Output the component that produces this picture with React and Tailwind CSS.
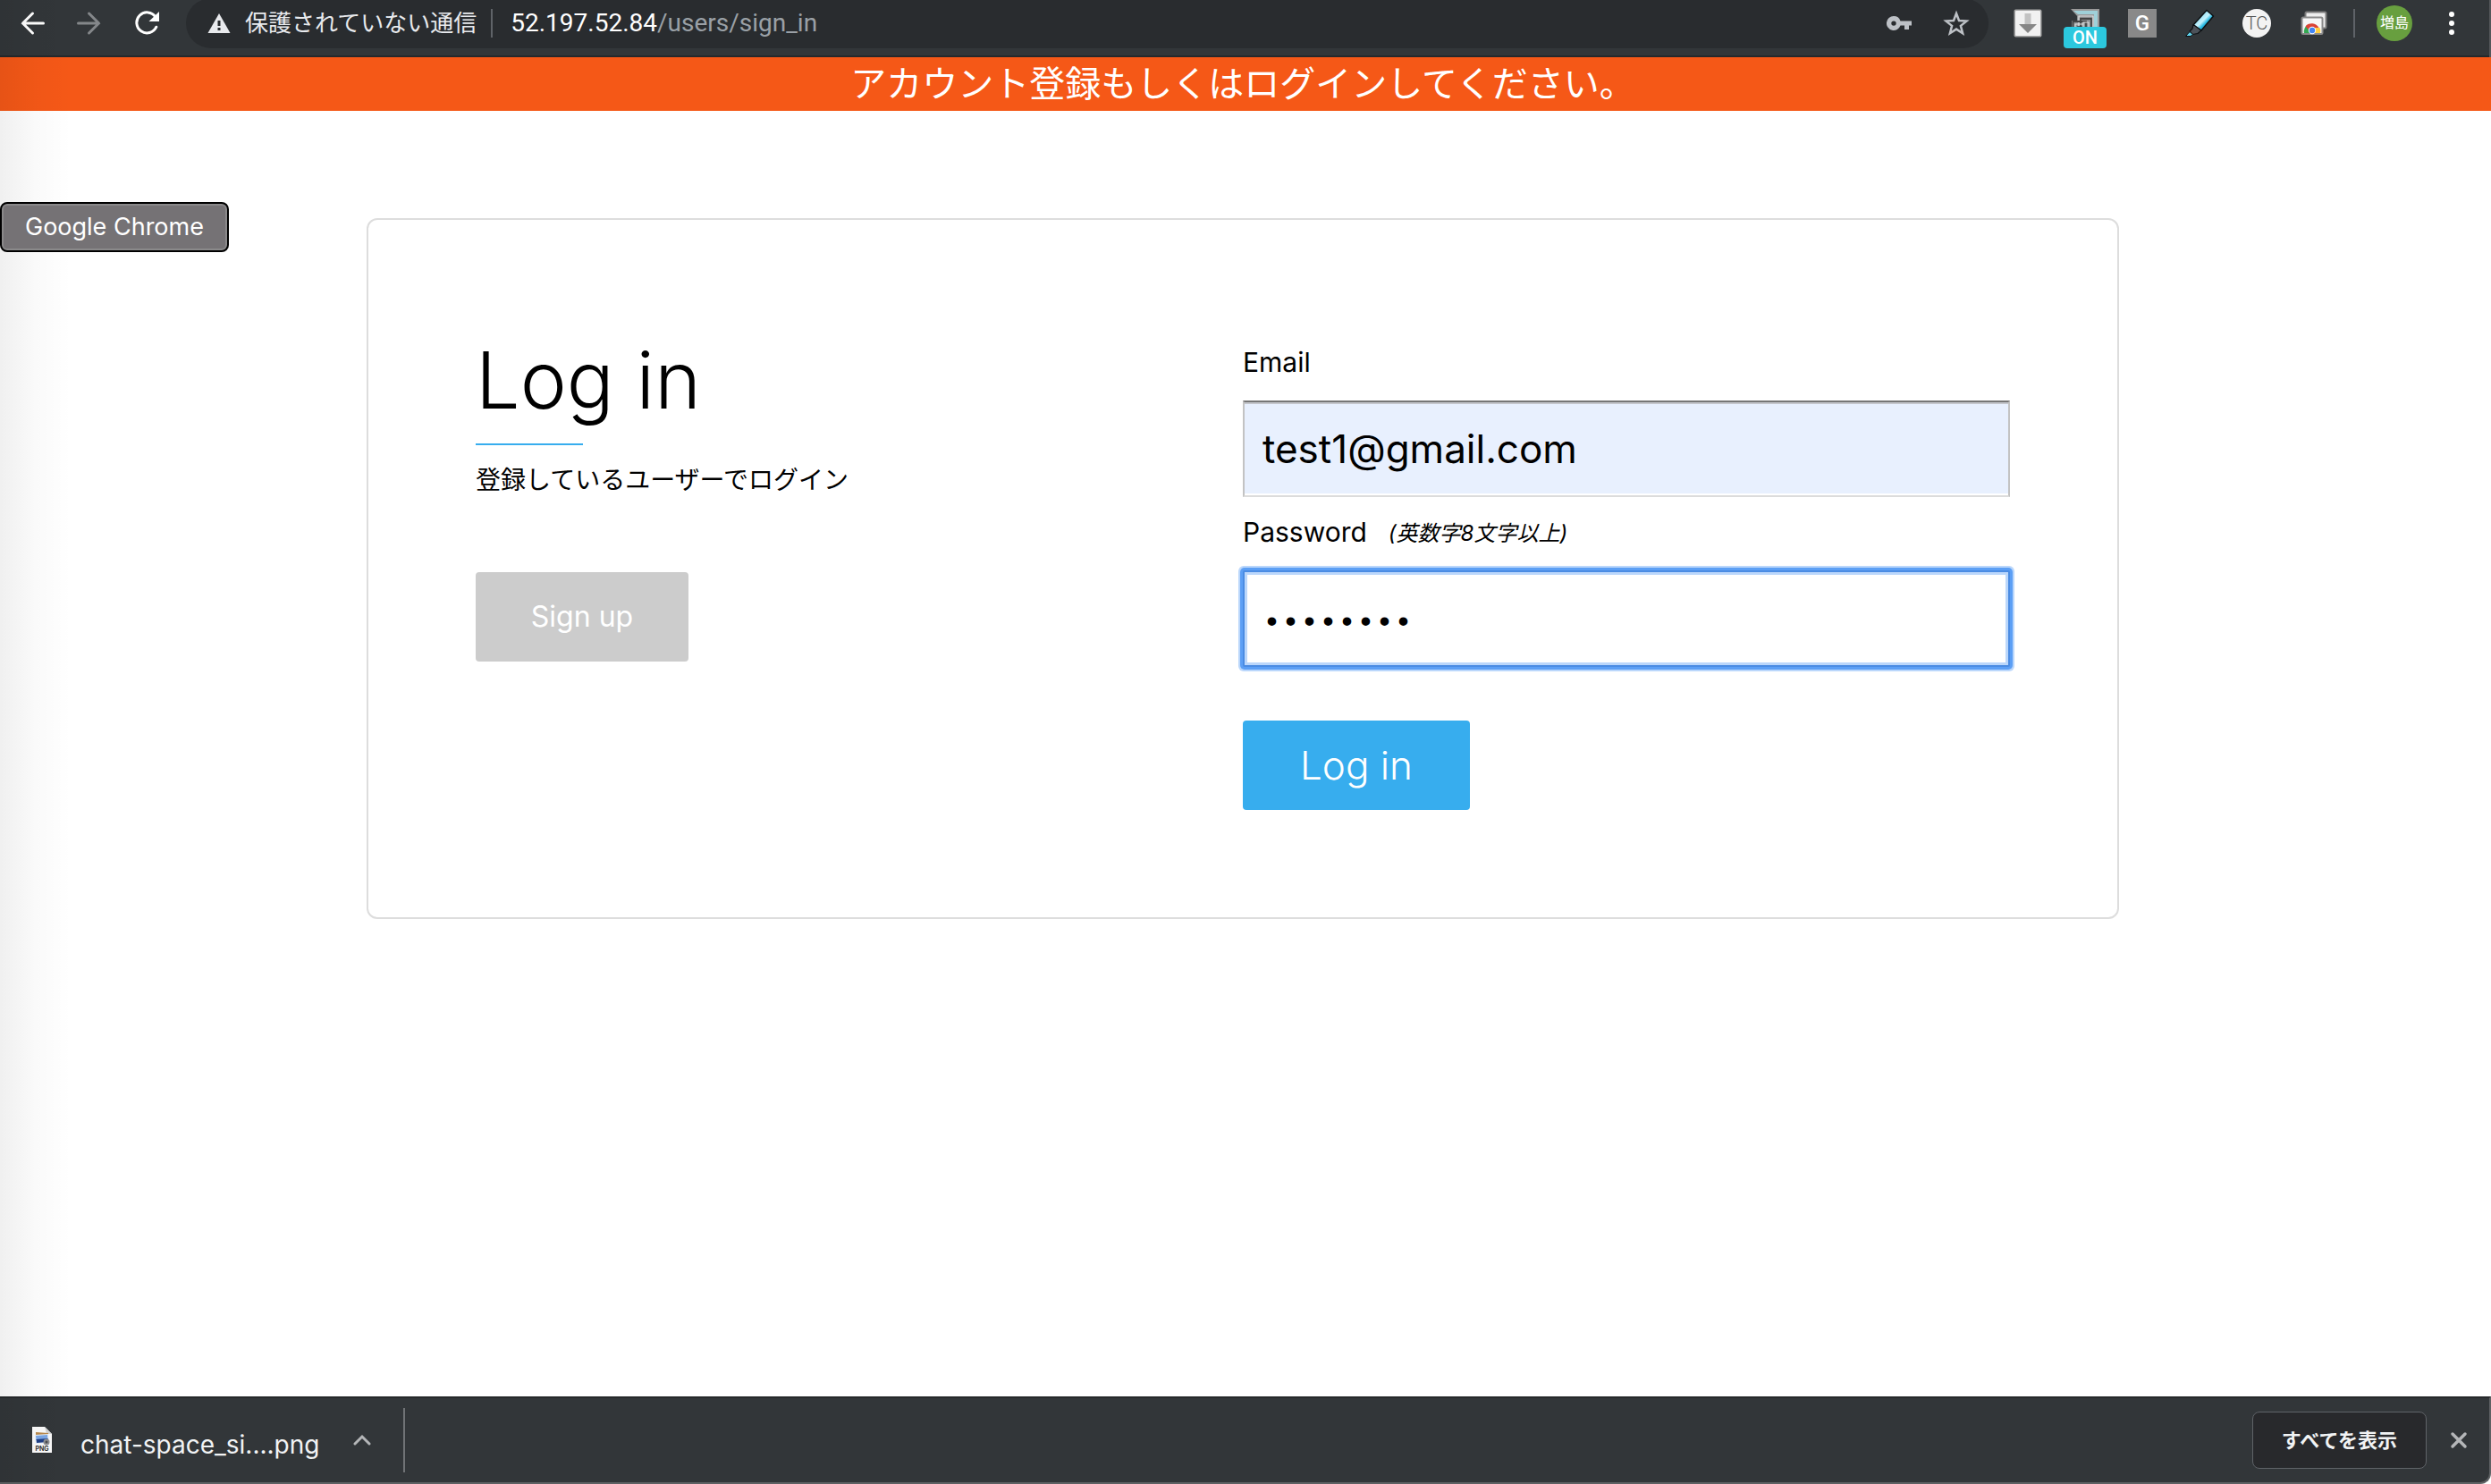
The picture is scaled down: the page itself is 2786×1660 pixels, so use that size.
import React from "react";

function BackIcon() {
  return (
    <svg width="28" height="28" viewBox="0 0 28 28" fill="none" stroke="currentColor" strokeWidth="3" strokeLinecap="round" strokeLinejoin="miter">
      <path d="M14.500 3 3.500 14l11 11M3.500 14H26.500" />
    </svg>
  );
}

function ForwardIcon() {
  return (
    <svg width="28" height="28" viewBox="0 0 28 28" fill="none" stroke="currentColor" strokeWidth="3" strokeLinecap="round" strokeLinejoin="miter">
      <path d="M13.500 3l11 11-11 11M24.500 14H1.500" />
    </svg>
  );
}

function ReloadIcon() {
  return (
    <svg width="28" height="28" viewBox="0 0 28 28" fill="none">
      <path d="M23.800 6.800A11.500 11.500 0 1 0 24.800 18.200" stroke="currentColor" strokeWidth="3" strokeLinecap="round" />
      <path d="M28 1v11H16.500z" fill="currentColor" />
    </svg>
  );
}

function WarningIcon() {
  return (
    <svg width="26" height="24" viewBox="0 0 26 24">
      <path d="M13 1 25.500 23H.500z" fill="#e8eaed" />
      <path d="M11.500 9h3v6h-3zM11.500 17h3v3h-3z" fill="#292c2f" />
    </svg>
  );
}

function KeyIcon() {
  return (
    <svg width="28" height="18" viewBox="0 0 28 18">
      <path
        fillRule="evenodd"
        d="M8 1a8 8 0 1 0 7.500 10.600H20V16h5v-4.400h3V6.400H15.500A8 8 0 0 0 8 1zm0 5.400a2.700 2.700 0 1 1 0 5.400 2.700 2.700 0 0 1 0-5.400z"
        fill="#bdc1c6"
      />
    </svg>
  );
}

function StarIcon() {
  return (
    <svg width="30" height="30" viewBox="0 0 30 30" fill="none" stroke="#bdc1c6" strokeWidth="2.500">
      <path d="M15 4l3 8 8.500.600-6.600 5.300 2.200 8.300L15 21.600l-7.100 4.600 2.200-8.300-6.600-5.300L12 12z" />
    </svg>
  );
}

function SaveArrowIcon() {
  return (
    <svg width="32" height="32" viewBox="0 0 32 32">
      <rect x=".5" y=".5" width="31" height="31" rx="2" fill="#a4a4a4" />
      <rect x="2" y="2" width="28" height="28" rx="1" fill="#f1f1f1" />
      <path d="M12.500 5h7v12h-7z" fill="#c2c2c2" />
      <path d="M6 17h20L16 27z" fill="#868686" />
    </svg>
  );
}

function LayersIcon() {
  return (
    <svg width="32" height="32" viewBox="0 0 32 32" fill="none">
      <path d="M0 0h32v32H8V9z" fill="#999" />
      <path d="M3 2h27v22h-4V6H8z" fill="#9fd0d8" />
      <path d="M1 32V13h6V7h19v25" fill="#8c9092" />
      <path d="M9 24V8h16v16" stroke="#e3e3e3" strokeWidth="1.200" />
      <path d="M11 24V11h12v13M2.500 24V14H17v10" stroke="#444" strokeWidth="1.800" />
      <path d="M5 24v-7h9v7M14 24v-9h6v9" stroke="#ddd" strokeWidth="1.200" />
      <path d="M8 24v-4h4v4" stroke="#333" strokeWidth="1.500" />
    </svg>
  );
}

function HighlighterIcon() {
  return (
    <svg width="34" height="32" viewBox="0 0 34 32">
      <defs>
        <linearGradient id="pen" x1="0" y1="0" x2="1" y2="1">
          <stop offset=".2" stopColor="#7fdcf5" />
          <stop offset=".5" stopColor="#c4f1fc" />
          <stop offset=".62" stopColor="#28b9e2" />
          <stop offset="1" stopColor="#0b8fbd" />
        </linearGradient>
      </defs>
      <path d="M25 1.500 32.500 8 19 24l-9-6z" fill="url(#pen)" stroke="#0c1013" strokeWidth="1.500" strokeLinejoin="round" />
      <path d="M10 17.500 19 24l-4 3.500-6 1-3-3.500 3-3z" fill="#4c5259" stroke="#0c1013" strokeWidth="1.200" strokeLinejoin="round" />
      <path d="M6 25.500l3.500 3-2.500 2H1.500z" fill="#5fd4ee" stroke="#0c1013" strokeWidth="1" />
    </svg>
  );
}

function GalleryIcon() {
  return (
    <svg width="30" height="28" viewBox="0 0 30 28">
      <rect x="5.500" y="1.500" width="23" height="18" rx="1.500" fill="#eee" stroke="#7d7d7d" strokeWidth="2" />
      <rect x="1.500" y="7.500" width="23" height="18.500" rx="1.500" fill="#f7f7f7" stroke="#8a8a8a" strokeWidth="2" />
      <path d="M4 25a9 9 0 0 1 3-8.500L13 22v3z" fill="#34a853" />
      <path d="M5.500 17.500a9 9 0 0 1 15 1.500H13l-3.500 3z" fill="#db4437" />
      <path d="M13 19h8.500a9 9 0 0 1 .5 6h-9z" fill="#ffcd40" />
      <circle cx="13" cy="22" r="4.200" fill="#fff" />
      <circle cx="13" cy="22" r="3.200" fill="#4285f4" />
    </svg>
  );
}

function PngFileIcon() {
  return (
    <svg width="22" height="30" viewBox="0 0 22 30">
      <path d="M0 0h14l8 8v21H0z" fill="#fafafa" />
      <path d="M14 0l8 8h-6z" fill="#d5d5d5" />
      <path d="M4 6l14 1v4H4z" fill="#b98a4e" />
      <path d="M3 9l15-1 1 10-15 1z" fill="#e6eef8" />
      <path d="M4 10l13-1 .5 5-13 1z" fill="#7ba7e6" />
      <path d="M4.500 14l13-1 .5 4-13 1z" fill="#1f3f86" />
      <circle cx="16" cy="17" r="3.500" fill="#8d8f92" />
      <circle cx="16" cy="17" r="1.500" fill="#4a4c4f" />
      <text x="11" y="27" textAnchor="middle" fontSize="7" fontWeight="700" fontFamily="Inter, sans-serif" fill="#333">PNG</text>
    </svg>
  );
}

function ToolButton({ label, children, className = "" }) {
  return (
    <button type="button" aria-label={label} className={`flex h-12 w-16 shrink-0 items-center justify-center ${className}`}>
      {children}
    </button>
  );
}

function Toolbar() {
  return (
    <header className="flex h-16 items-center border-r-2 border-[#54575a] bg-[#323639] pr-2.5 pb-3 pl-1 font-[Roboto,'Noto_Sans_CJK_JP',sans-serif] shadow-[inset_0_-2px_0_#25282b]">
      <ToolButton label="戻る" className="text-white"><BackIcon /></ToolButton>
      <ToolButton label="進む" className="text-[#84878a]"><ForwardIcon /></ToolButton>
      <ToolButton label="再読み込み" className="text-white"><ReloadIcon /></ToolButton>
      <div className="ml-3 flex h-14 min-w-0 flex-1 items-center rounded-full bg-[#292c2f] pr-1 pl-6">
        <WarningIcon />
        <span className="ml-4 text-[26px] leading-10 whitespace-nowrap text-[#e8eaed]">保護されていない通信</span>
        <span className="mr-5 ml-4 h-8 w-0.5 bg-[#5f6368]" />
        <a href="#sign_in" className="text-[28px] leading-10 whitespace-nowrap text-[#9aa0a6]">
          <span className="text-white">52.197.52.84</span>/users/sign_in
        </a>
        <div className="flex-1" />
        <ToolButton label="パスワード"><KeyIcon /></ToolButton>
        <ToolButton label="ブックマーク"><StarIcon /></ToolButton>
      </div>
      <div className="ml-3 flex">
        <ToolButton label="Download"><SaveArrowIcon /></ToolButton>
        <ToolButton label="Layers" className="relative">
          <LayersIcon />
          <span className="absolute bottom-[-4px] left-2 flex h-6 w-12 items-center justify-center rounded bg-[#2cc8de] text-[20px] font-medium text-white">ON</span>
        </ToolButton>
        <ToolButton label="G">
          <span className="flex size-8 items-center justify-center bg-[#898989] text-[24px] font-medium text-white">G</span>
        </ToolButton>
        <ToolButton label="Highlighter"><HighlighterIcon /></ToolButton>
        <ToolButton label="TC">
          <span className="flex size-8 items-center justify-center rounded-full bg-[#f3f3f3] text-[20px] font-light text-[#555]">TC</span>
        </ToolButton>
        <ToolButton label="Gallery"><GalleryIcon /></ToolButton>
      </div>
      <span className="ml-3 h-8 w-0.5 bg-[#5f6368]" />
      <button type="button" className="ml-6 flex size-10 items-center justify-center rounded-full bg-[#689f3f] text-[16px] whitespace-nowrap text-white">増島</button>
      <ToolButton label="メニュー" className="ml-3">
        <span className="flex flex-col gap-1">
          <span className="size-1.5 rounded-full bg-white" />
          <span className="size-1.5 rounded-full bg-white" />
          <span className="size-1.5 rounded-full bg-white" />
        </span>
      </ToolButton>
    </header>
  );
}

function LoginCard() {
  return (
    <section className="mx-auto mt-[120px] flex w-full max-w-[1960px] rounded-xl border-2 border-[#ddd] bg-white p-[120px]">
      <div className="flex-1">
        <h1 className="text-[88px] leading-[118px] font-light">Log in</h1>
        <div className="mt-3 h-0.5 w-[120px] bg-[#37adee]" />
        <p className="mt-4 text-[28px] leading-[46px]">登録しているユーザーでログイン</p>
        <button type="button" className="mt-20 h-[100px] min-w-[238px] rounded bg-[#ccc] px-10 text-[32px] text-white">Sign up</button>
      </div>
      <form className="flex-1" onSubmit={(e) => e.preventDefault()}>
        <label htmlFor="email" className="mb-1 flex h-[78px] items-center text-[30px]">Email</label>
        <input
          id="email"
          type="email"
          defaultValue="test1@gmail.com"
          className="block h-[108px] w-full border-2 border-x-[#c3c3c3] border-t-[#767676] border-b-[#dcdcdc] bg-[#e8f0fe] px-5 text-[44px] shadow-[inset_0_2px_0_#c4c6cc,inset_0_-2px_0_#fff] outline-none"
        />
        <label htmlFor="password" className="mb-1 flex h-[78px] items-center text-[30px]">
          Password <i className="mt-1 ml-6 text-[24px]">(英数字8文字以上)</i>
        </label>
        <input
          id="password"
          type="password"
          defaultValue="password"
          className="block h-[108px] w-full rounded-xs border-2 border-[#4b8ce3] bg-white px-5 pt-3 font-['Liberation_Mono',monospace] text-[35px] shadow-[0_0_0_3px_#5c9ff5,0_0_0_5px_#bbd7fb,inset_0_0_0_3px_#bbd7fb] outline-none"
        />
        <button type="submit" className="mt-[60px] h-[100px] min-w-[254px] rounded bg-[#37adee] px-10 text-[44px] font-light text-white">Log in</button>
      </form>
    </section>
  );
}

function DownloadShelf() {
  return (
    <footer className="flex h-[98px] items-center rounded-br-xl border-t-2 border-r-2 border-b-2 border-t-[#26292b] border-r-[#5e6163] border-b-[#5e6163] bg-[#323639] pr-5.5">
      <button type="button" className="flex items-center pl-9 text-[28px] text-[#f1f3f4]">
        <PngFileIcon />
        <span className="mt-2.5 ml-8 leading-10">chat-space_si....png</span>
      </button>
      <ToolButton label="メニューを開く" className="ml-4">
        <svg width="20" height="14" viewBox="0 0 20 14" fill="none" stroke="#b4b6b8" strokeWidth="3" strokeLinecap="round">
          <path d="M2 11l8-8 8 8" />
        </svg>
      </ToolButton>
      <span className="ml-3.5 h-[72px] w-0.5 bg-[#707376]" />
      <div className="flex-1" />
      <button type="button" className="h-16 rounded-lg border border-[#5f6368] bg-[#28292c] px-8 text-[22px] font-bold text-[#f1f3f4]">すべてを表示</button>
      <button type="button" aria-label="閉じる" className="ml-6 flex size-6 items-center justify-center">
        <svg width="20" height="20" viewBox="0 0 20 20" fill="none" stroke="#b4b6b8" strokeWidth="3.500" strokeLinecap="round">
          <path d="M3 3l14 14M17 3 3 17" />
        </svg>
      </button>
    </footer>
  );
}

export default function App() {
  return (
    <div className="relative flex min-h-screen flex-col overflow-hidden bg-white font-[Inter,'Noto_Sans_CJK_JP',sans-serif] text-black">
      <Toolbar />
      <main className="flex-1">
        <p className="bg-[#f55817] pr-1.5 text-center text-[40px] leading-[60px] text-white">アカウント登録もしくはログインしてください。</p>
        <div className="pr-1.5">
          <LoginCard />
        </div>
      </main>
      <DownloadShelf />
      <div className="pointer-events-none absolute inset-y-0 left-0 w-20 bg-linear-to-r from-black/6 via-black/2 to-transparent" />
      <div role="tooltip" className="absolute top-[226px] left-0 rounded-lg border-2 border-black bg-[#757275] px-[26px] py-2 text-[27px] leading-9 text-white shadow-[inset_0_0_0_2px_#8a898a]">Google Chrome</div>
    </div>
  );
}
